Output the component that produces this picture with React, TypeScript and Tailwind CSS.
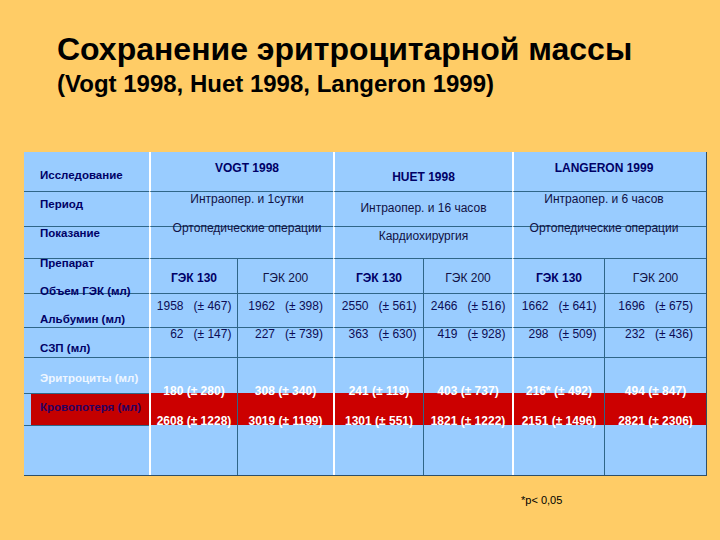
import React from "react";

const dataVB = [
  "border-l-2 border-l-white",
  "border-l border-l-[#2f6688]",
  "border-l-2 border-l-white",
  "border-l border-l-[#2f6688]",
  "border-l-2 border-l-white",
  "border-l border-l-[#2f6688]",
];

const row1 = [
  ["1958", "(± 467)"],
  ["1962", "(± 398)"],
  ["2550", "(± 561)"],
  ["2466", "(± 516)"],
  ["1662", "(± 641)"],
  ["1696", "(± 675)"],
];
const row2 = [
  ["62", "(± 147)"],
  ["227", "(± 739)"],
  ["363", "(± 630)"],
  ["419", "(± 928)"],
  ["298", "(± 509)"],
  ["232", "(± 436)"],
];
const ery = ["180 (± 280)", "308 (± 340)", "241 (± 119)", "403 (± 737)", "216* (± 492)", "494 (± 847)"];
const blood = ["2608 (± 1228)", "3019 (± 1199)", "1301 (± 551)", "1821 (± 1222)", "2151 (± 1496)", "2821 (± 2306)"];

const label = "pl-[16px] text-[11.5px] leading-[12px] font-bold text-[#000066] whitespace-nowrap";
const head = "text-[12px] leading-[12px] text-[#111144] whitespace-nowrap text-center";

export default function App() {
  return (
    <div className="w-[720px] h-[540px] overflow-hidden bg-[#ffcc66] font-['Liberation_Sans',Arial,sans-serif]">
      <div className="pl-[57px] pt-[33px] h-[152px] text-black">
        <div className="text-[32px] leading-[32px] font-bold whitespace-nowrap">Сохранение эритроцитарной массы</div>
        <div className="mt-[7px] text-[24px] leading-[24px] font-bold whitespace-nowrap">(Vogt 1998, Huet 1998, Langeron 1999)</div>
      </div>

      <div className="ml-[24px] grid w-max grid-cols-[125px_88px_96px_90px_89px_92px_102px] grid-rows-[39px_35px_32px_35px_34px_30px_36px_32px_50px] bg-[#99ccff] border-r border-b border-[#2f4f66]">
        {/* Row 1 */}
        <div className={label + " pt-[17px]"}>Исследование</div>
        <div className="col-span-2 border-l-2 border-l-white">
          <div className="pt-[10px] pl-[10px] text-center text-[12px] leading-[12px] font-bold text-[#000066]">VOGT 1998</div>
        </div>
        <div className="col-span-2 border-l-2 border-l-white">
          <div className="pt-[19px] text-center text-[12px] leading-[12px] font-bold text-[#000066]">HUET 1998</div>
        </div>
        <div className="col-span-2 border-l-2 border-l-white">
          <div className="pt-[10px] pr-[12px] text-center text-[12px] leading-[12px] font-bold text-[#000066]">LANGERON 1999</div>
        </div>

        {/* Row 2 */}
        <div className="border-t border-t-[#2f6688]"><div className={label + " pt-[6px]"}>Период</div></div>
        <div className="col-span-2 border-t border-t-[#2f6688] border-l-2 border-l-white">
          <div className={head + " pt-[1px] pl-[10px]"}>Интраопер. и  1сутки</div>
        </div>
        <div className="col-span-2 border-t border-t-[#2f6688] border-l-2 border-l-white">
          <div className={head + " pt-[10px]"}>Интраопер. и  16 часов</div>
        </div>
        <div className="col-span-2 border-t border-t-[#2f6688] border-l-2 border-l-white">
          <div className={head + " pt-[1px] pr-[12px]"}>Интраопер. и 6 часов</div>
        </div>

        {/* Row 3 */}
        <div className="border-t border-t-[#2f6688]"><div className={label + " pt-[0px]"}>Показание</div></div>
        <div className="col-span-2 border-t border-t-[#2f6688] border-l-2 border-l-white">
          <div className={head + " -mt-[5px] pl-[10px]"}>Ортопедические операции</div>
        </div>
        <div className="col-span-2 border-t border-t-[#2f6688] border-l-2 border-l-white">
          <div className={head + " pt-[3px]"}>Кардиохирургия</div>
        </div>
        <div className="col-span-2 border-t border-t-[#2f6688] border-l-2 border-l-white">
          <div className={head + " -mt-[5px] pr-[12px]"}>Ортопедические операции</div>
        </div>

        {/* Row 4 */}
        <div className="border-t border-t-[#2f6688]"><div className={label + " -mt-[2px]"}>Препарат</div></div>
        {[0, 1, 2, 3, 4, 5].map((i) => (
          <div key={"h" + i} className={"border-t border-t-[#2f6688] " + dataVB[i]}>
            <div className={i % 2 === 0 ? "pt-[13px] text-center text-[12px] leading-[12px] font-bold text-[#000066]" : "pt-[13px] text-center text-[12px] leading-[12px] text-[#111144]"}>
              {i % 2 === 0 ? "ГЭК 130" : "ГЭК 200"}
            </div>
          </div>
        ))}

        {/* Row 5 */}
        <div className="border-t border-t-[#2f6688]">
          <div className={label + " -mt-[9px]"}>Объем ГЭК (мл)</div>
          <div className={label + " mt-[16px]"}>Альбумин (мл)</div>
        </div>
        {row1.map(([a, b], i) => (
          <div key={"r1" + i} className={"border-t border-t-[#2f6688] " + dataVB[i]}>
            <div className="pt-[6px] flex justify-center gap-[10px] text-[12px] leading-[12px] text-[#0d0d55] whitespace-nowrap">
              <span className="w-[27px] text-right">{a}</span>
              <span>{b}</span>
            </div>
          </div>
        ))}

        {/* Row 6 */}
        <div className="border-t border-t-[#2f6688]"><div className={label + " pt-[14px]"}>СЗП (мл)</div></div>
        {row2.map(([a, b], i) => (
          <div key={"r2" + i} className={"border-t border-t-[#2f6688] " + dataVB[i]}>
            <div className="pt-[0px] flex justify-center gap-[10px] text-[12px] leading-[12px] text-[#0d0d55] whitespace-nowrap">
              <span className="w-[27px] text-right">{a}</span>
              <span>{b}</span>
            </div>
          </div>
        ))}

        {/* Row 7 */}
        <div className="border-t border-t-[#2f6688]">
          <div className="pl-[16px] pt-[14px] text-[11.5px] leading-[12px] font-bold text-[#eef6ff] whitespace-nowrap">Эритроциты (мл)</div>
        </div>
        {[0, 1, 2, 3, 4, 5].map((i) => (
          <div key={"e" + i} className={"border-t border-t-[#2f6688] " + dataVB[i]} />
        ))}

        {/* Row 8 */}
        <div className="border-t border-t-[#2f6688] pl-[7px]">
          <div className="h-full bg-[#c40000]">
            <div className="pl-[9px] pt-[7px] text-[11.5px] leading-[12px] font-bold text-[#2a0060] whitespace-nowrap">Кровопотеря (мл)</div>
          </div>
        </div>
        {[0, 1, 2, 3, 4, 5].map((i) => (
          <div key={"b" + i} className={"bg-[#cc0000] " + dataVB[i]}>
            <div className="-mt-[8px] text-center text-[12px] leading-[12px] font-bold text-white whitespace-nowrap">{ery[i]}</div>
            <div className="mt-[18px] text-center text-[12px] leading-[12px] font-bold text-white whitespace-nowrap">{blood[i]}</div>
          </div>
        ))}

        {/* Row 9 */}
        <div className="border-t border-t-[#2f6688]" />
        {[0, 1, 2, 3, 4, 5].map((i) => (
          <div key={"z" + i} className={dataVB[i]} />
        ))}
      </div>

      <div className="pl-[521px] pt-[18px] text-[11px] leading-[12px] text-black whitespace-nowrap">*p&lt; 0,05</div>
    </div>
  );
}
